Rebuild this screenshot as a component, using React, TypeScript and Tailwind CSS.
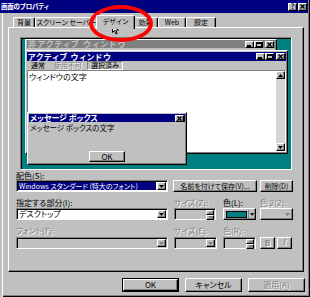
import React from 'react';

type GlyphKind = 'min' | 'max' | 'close' | 'down' | 'up';

const raised =
  'border border-t-white border-l-white border-r-black border-b-black shadow-[inset_-1px_-1px_0_#808080]';
const sunken =
  'border border-t-[#808080] border-l-[#808080] border-r-white border-b-white shadow-[inset_1px_1px_0_#000]';
const grayed = 'text-[#808080] [text-shadow:1px_1px_0_#fff]';

function Glyph({ kind, disabled = false }: { kind: GlyphKind; disabled?: boolean }) {
  const c = disabled ? '#808080' : '#000';
  if (kind === 'min') {
    return (
      <svg width="5" height="5" viewBox="0 0 5 5">
        <rect x="0" y="3" width="4" height="2" fill={c} />
      </svg>
    );
  }
  if (kind === 'max') {
    return (
      <svg width="6" height="5" viewBox="0 0 6 5">
        <rect x="0.5" y="0.5" width="5" height="4" fill="none" stroke={c} />
        <rect x="0" y="0" width="6" height="2" fill={c} />
      </svg>
    );
  }
  if (kind === 'close') {
    return (
      <svg width="5" height="5" viewBox="0 0 5 5">
        <path d="M0.5 0.5L4.5 4.5M4.5 0.5L0.5 4.5" stroke={c} strokeWidth="1.3" />
      </svg>
    );
  }
  if (kind === 'up') {
    return (
      <svg width="5" height="3" viewBox="0 0 5 3">
        <path d="M2.5 0L5 3H0z" fill={c} />
      </svg>
    );
  }
  return (
    <svg width="5" height="3" viewBox="0 0 5 3">
      <path d="M0 0h5L2.5 3z" fill={c} />
    </svg>
  );
}

function CapBtn({ kind, h = 'h-[8px]' }: { kind: GlyphKind; h?: string }) {
  return (
    <div className={`w-[9px] ${h} bg-[#c0c0c0] ${raised} flex items-center justify-center`}>
      <Glyph kind={kind} />
    </div>
  );
}

function ArrowBtn({ disabled = false }: { disabled?: boolean }) {
  return (
    <div className={`w-[9px] h-full bg-[#c0c0c0] ${raised} flex items-center justify-center shrink-0`}>
      <Glyph kind="down" disabled={disabled} />
    </div>
  );
}

function Btn({ w, children, disabled = false, def = false }: { w: string; children: React.ReactNode; disabled?: boolean; def?: boolean }) {
  return (
    <div className={`${w} h-full ${def ? 'border border-black' : ''}`}>
      <div className={`w-full h-full bg-[#c0c0c0] ${raised} flex items-center justify-center leading-none whitespace-nowrap ${disabled ? grayed : 'text-black'}`}>
        {children}
      </div>
    </div>
  );
}

function Label({ w, children, disabled = false }: { w: string; children: React.ReactNode; disabled?: boolean }) {
  return <div className={`${w} shrink-0 whitespace-nowrap ${disabled ? grayed : 'text-black'}`}>{children}</div>;
}

const tabs = [
  { label: '背景', w: 'w-[22px]' },
  { label: 'スクリーン セーバー', w: 'w-[63px]' },
  { label: 'デザイン', w: 'w-[39px]', active: true },
  { label: '効果', w: 'w-[25px]' },
  { label: 'Web', w: 'w-[28px]' },
  { label: '設定', w: 'w-[30px]' },
];

export default function App() {
  return (
    <div className="relative w-[310px] h-[297px] overflow-hidden bg-[#c0c0c0] text-[8px] font-['Noto_Sans_CJK_JP','Noto_Sans',sans-serif] [font-feature-settings:'palt'] shadow-[inset_2px_0_0_#c0c0c0,inset_3px_0_0_#fff,inset_-1px_-1px_0_#000,inset_-2px_-2px_0_#808080]">
      {/* タイトルバー */}
      <div className="h-[13px] mr-[2px] bg-[#000080] flex items-center justify-between pl-[1px] pr-[1px]">
        <span className="text-white text-[6.5px] font-bold leading-none tracking-[-0.2px]">画面のプロパティ</span>
        <div className="flex gap-[1px]">
          <div className={`w-[9px] h-[8px] bg-[#c0c0c0] ${raised} flex items-center justify-center text-[7px] font-bold leading-none text-black`}>?</div>
          <CapBtn kind="close" />
        </div>
      </div>

      {/* タブ */}
      <div className="mt-[2px] h-[12px] flex items-end pl-[13px] text-[7px]">
        {tabs.map((t) => (
          <div
            key={t.label}
            className={`${t.w} shrink-0 bg-[#c0c0c0] border-t border-l border-t-white border-l-white border-r border-r-black shadow-[inset_-1px_0_0_#808080] rounded-t-[2px] flex items-center justify-center text-black leading-none whitespace-nowrap ${
              t.active ? 'h-[14px] -mb-[2px] -mx-[2px] relative z-10 pb-[2px]' : 'h-[10px]'
            }`}
          >
            {t.label}
          </div>
        ))}
      </div>

      {/* タブの中身 */}
      <div className="ml-[8px] w-[296px] h-[245px] border border-t-white border-l-white border-r-black border-b-black shadow-[inset_-1px_-1px_0_#808080]">
        {/* プレビュー */}
        <div className={`relative ml-[11px] mt-[9px] w-[272px] h-[133px] bg-[#008080] ${sunken} pl-[4px] pt-[1px]`}>
          {/* 非アクティブ ウィンドウ */}
          <div className="w-[252px] h-[11px] bg-[#c0c0c0] border-t border-l border-t-white border-l-white border-r border-r-black shadow-[inset_-1px_0_0_#808080] px-[1px]">
            <div className="h-[8px] bg-[#808080] flex items-center justify-between pl-[1px] pr-[1px]">
              <span className="text-[#c0c0c0] font-bold leading-none whitespace-nowrap tracking-[1.5px]">非アクティブ ウィンドウ</span>
              <div className="flex items-center">
                <CapBtn kind="min" h="h-[7px]" />
                <CapBtn kind="max" h="h-[7px]" />
                <div className="w-[2px]" />
                <CapBtn kind="close" h="h-[7px]" />
              </div>
            </div>
          </div>

          {/* アクティブ ウィンドウ */}
          <div className={`w-[263px] h-[104px] bg-[#c0c0c0] ${raised} p-[1px] flex flex-col`}>
            <div className="h-[9px] bg-[#000080] flex items-center justify-between pl-[1px] pr-[1px] shrink-0">
              <span className="text-white font-bold leading-none whitespace-nowrap tracking-[1px]">アクティブ ウィンドウ</span>
              <div className="flex items-center">
                <CapBtn kind="min" h="h-[7px]" />
                <CapBtn kind="max" h="h-[7px]" />
                <div className="w-[2px]" />
                <CapBtn kind="close" h="h-[7px]" />
              </div>
            </div>
            <div className="h-[9px] flex items-center leading-none shrink-0 pl-[4px] text-[7px] whitespace-nowrap">
              <span className="text-black shrink-0">通常</span>
              <span className={`${grayed} shrink-0 ml-[9px]`}>使用不可</span>
              <span className="text-black shrink-0 ml-[5px] h-[9px] px-[3px] flex items-center border border-t-[#808080] border-l-[#808080] border-r-white border-b-white">選択済み</span>
            </div>
            <div className="flex-1 flex border border-t-[#808080] border-l-[#808080] border-r-white border-b-white">
              <div className="flex-1 bg-white text-black leading-none pl-[1px] pt-[2px]">ウィンドウの文字</div>
              <div className="w-[9px] flex flex-col bg-[#d4d4d4]">
                <div className={`h-[8px] bg-[#c0c0c0] ${raised} flex items-center justify-center`}>
                  <Glyph kind="up" />
                </div>
                <div className="flex-1" />
                <div className={`h-[8px] bg-[#c0c0c0] ${raised} flex items-center justify-center`}>
                  <Glyph kind="down" />
                </div>
              </div>
            </div>
          </div>

          {/* メッセージ ボックス */}
          <div className={`absolute left-[6px] top-[74px] w-[160px] h-[53px] bg-[#c0c0c0] ${raised} p-[1px] flex flex-col`}>
            <div className="h-[8px] bg-[#000080] flex items-center justify-between pl-[1px] pr-[1px]">
              <span className="text-white font-bold leading-none">メッセージ ボックス</span>
              <CapBtn kind="close" h="h-[7px]" />
            </div>
            <div className="text-black leading-none pl-[1px] pt-[2px] text-[7.5px]">メッセージ ボックスの文字</div>
            <div className="flex-1" />
            <div className="h-[11px] flex justify-center mb-[1px]">
              <Btn w="w-[36px]">OK</Btn>
            </div>
          </div>
        </div>

        {/* 設定項目 */}
        <div className="ml-[7px] leading-[8px]">
          <div className="mt-[2px] h-[8px] text-black">配色(S):</div>
          <div className="h-[12px] flex">
            <div className={`w-[152px] h-full bg-white ${sunken} flex p-[1px]`}>
              <div className="flex-1 bg-[#000080] text-white text-[7px] leading-none flex items-center pl-[1px] mr-[1px] whitespace-nowrap">
                Windows スタンダード (特大のフォント)
              </div>
              <ArrowBtn />
            </div>
            <div className="ml-[5px] h-full text-[7px]">
              <Btn w="w-[84px]">名前を付けて保存(V)...</Btn>
            </div>
            <div className="ml-[3px] h-full text-[7px]">
              <Btn w="w-[33px]">削除(D)</Btn>
            </div>
          </div>

          <div className="mt-[6px] h-[9px] flex leading-[9px]">
            <Label w="w-[158px]">指定する部分(I):</Label>
            <Label w="w-[49px]" disabled>サイズ(Z):</Label>
            <Label w="w-[37px]">色(L):</Label>
            <Label w="w-[33px]" disabled>色 2(2):</Label>
          </div>
          <div className="mt-[1px] h-[12px] flex">
            <div className={`w-[152px] h-full bg-white ${sunken} flex p-[1px]`}>
              <div className="flex-1 text-black leading-none flex items-center pl-[1px]">デスクトップ</div>
              <ArrowBtn />
            </div>
            <div className={`ml-[6px] w-[42px] h-full bg-[#c0c0c0] ${sunken} flex justify-end p-[1px]`}>
              <div className="w-[8px] h-full flex flex-col">
                <div className={`flex-1 ${raised} flex items-center justify-center`}>
                  <Glyph kind="up" disabled />
                </div>
                <div className={`flex-1 ${raised} flex items-center justify-center`}>
                  <Glyph kind="down" disabled />
                </div>
              </div>
            </div>
            <div className={`ml-[7px] w-[33px] h-full bg-[#c0c0c0] ${raised} flex items-center pl-[2px] pr-[1px] gap-[1px]`}>
              <div className="w-[24px] h-[7px] bg-[#008080] border border-black" />
              <div className="w-[1px] h-[8px] bg-[#808080]" />
              <Glyph kind="down" />
            </div>
            <div className={`ml-[4px] w-[33px] h-full bg-[#c0c0c0] ${raised} flex items-center justify-end pr-[2px]`}>
              <Glyph kind="down" disabled />
            </div>
          </div>

          <div className="mt-[6px] h-[9px] flex leading-[9px]">
            <Label w="w-[158px]" disabled>フォント(F):</Label>
            <Label w="w-[49px]" disabled>サイズ(E):</Label>
            <Label w="w-[37px]" disabled>色(R):</Label>
          </div>
          <div className="mt-[2px] h-[12px] flex">
            <div className={`w-[152px] h-full bg-[#c0c0c0] ${sunken} flex p-[1px]`}>
              <div className="flex-1" />
              <ArrowBtn disabled />
            </div>
            <div className={`ml-[6px] w-[43px] h-full bg-[#c0c0c0] ${sunken} flex p-[1px]`}>
              <div className="flex-1" />
              <ArrowBtn disabled />
            </div>
            <div className={`ml-[6px] w-[33px] h-full bg-[#c0c0c0] ${sunken} flex justify-end p-[1px]`}>
              <div className="w-[8px] h-full flex flex-col">
                <div className={`flex-1 ${raised} flex items-center justify-center`}>
                  <Glyph kind="up" disabled />
                </div>
                <div className={`flex-1 ${raised} flex items-center justify-center`}>
                  <Glyph kind="down" disabled />
                </div>
              </div>
            </div>
            <div className="ml-[4px] h-full">
              <Btn w="w-[15px]" disabled>
                <span className="font-bold">B</span>
              </Btn>
            </div>
            <div className="ml-[2px] h-full">
              <Btn w="w-[15px]" disabled>
                <span className="italic font-['Liberation_Serif',serif]">I</span>
              </Btn>
            </div>
          </div>
        </div>
      </div>

      {/* 下部ボタン */}
      <div className="mt-[6px] h-[14px] flex justify-end gap-[6px] pr-[5px]">
        <Btn w="w-[57px]" def>
          OK
        </Btn>
        <Btn w="w-[57px]">キャンセル</Btn>
        <Btn w="w-[57px]" disabled>
          適用(A)
        </Btn>
      </div>

      {/* 赤い丸とカーソル */}
      <div className="absolute left-[89px] top-[5px] w-[64px] h-[37px] rounded-[50%] border-[4px] border-[#ff0000] pointer-events-none" />
      <svg className="absolute left-[112px] top-[24px]" width="7" height="11" viewBox="0 0 7 11">
        <path d="M0.5 0.5V8.5L2.5 6.5L4 10L5.2 9.5L3.8 6H6.5Z" fill="#fff" stroke="#000" strokeWidth="1" strokeLinejoin="miter" />
      </svg>
    </div>
  );
}
